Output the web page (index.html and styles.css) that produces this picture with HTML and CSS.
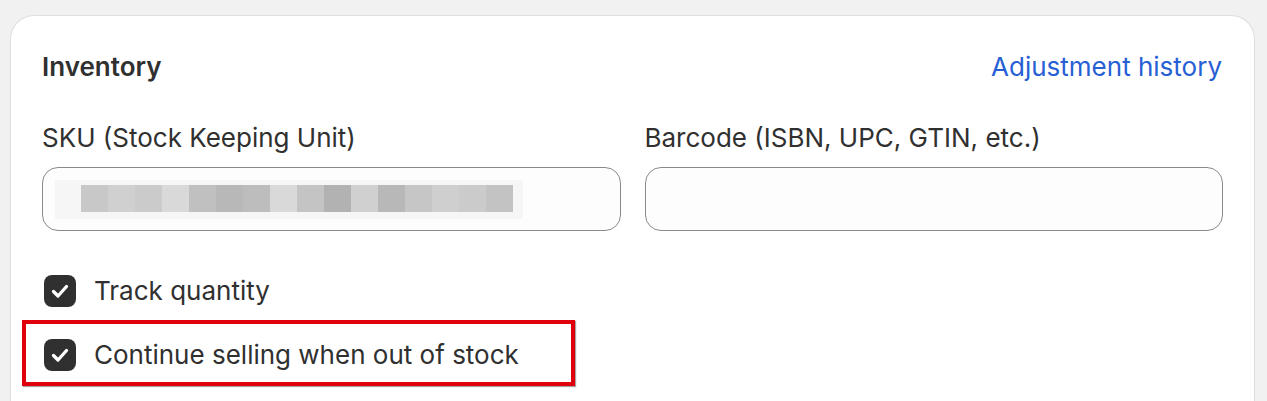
FILE: index.html
```html
<!DOCTYPE html>
<html lang="en">
<head>
<meta charset="utf-8">
<title>Inventory</title>
<link rel="stylesheet" href="styles.css">
</head>
<body>
<div class="page">
  <section class="card">
    <header class="card-head">
      <h2 class="title">Inventory</h2>
      <a class="link" href="#">Adjustment history</a>
    </header>
    <div class="fields">
      <div class="field">
        <label class="label">SKU (Stock Keeping Unit)</label>
        <div class="input">
          <div class="blur">
            <span></span><span></span><span></span><span></span>
            <span></span><span></span><span></span><span></span>
            <span></span><span></span><span></span><span></span>
            <span></span><span></span><span></span><span></span>
          </div>
        </div>
      </div>
      <div class="field">
        <label class="label">Barcode (ISBN, UPC, GTIN, etc.)</label>
        <div class="input"></div>
      </div>
    </div>
    <div class="checks">
      <div class="check">
        <span class="box"><svg viewBox="0 0 32 32" width="32" height="32"><path d="M9.5 16.5 L14 21 L22.5 11.5" fill="none" stroke="#fff" stroke-width="3.3" stroke-linecap="round" stroke-linejoin="round"/></svg></span>
        <span class="check-label">Track quantity</span>
      </div>
      <div class="check">
        <span class="box"><svg viewBox="0 0 32 32" width="32" height="32"><path d="M9.5 16.5 L14 21 L22.5 11.5" fill="none" stroke="#fff" stroke-width="3.3" stroke-linecap="round" stroke-linejoin="round"/></svg></span>
        <span class="check-label">Continue selling when out of stock</span>
      </div>
    </div>
    <div class="highlight"></div>
  </section>
</div>
</body>
</html>
```
FILE: styles.css
```css
* { box-sizing: border-box; }
html, body { margin: 0; padding: 0; background: #f1f1f1; }
body {
  font-family: Inter, "Noto Sans", "Liberation Sans", sans-serif;
  color: #303030;
  overflow: hidden;
}
.page {
  height: 100vh;
  padding: 15px 12px 0 10px;
  display: flex;
  flex-direction: column;
}
.card {
  position: relative;
  flex: 1;
  background: #fff;
  border: 1px solid #dedede;
  border-bottom: none;
  border-radius: 24px 24px 0 0;
  padding: 31px 31px 0 31px;
}
.card-head {
  display: flex;
  justify-content: space-between;
  align-items: center;
  height: 40px;
}
.title {
  margin: 0;
  font-size: 26px;
  line-height: 40px;
  font-weight: 600;
  color: #303030;
}
.link {
  font-size: 26px;
  line-height: 40px;
  color: #2760d4;
  text-decoration: none;
  margin-right: 1px;
}
.fields {
  display: grid;
  grid-template-columns: 1fr 1fr;
  column-gap: 24px;
  margin-top: 31px;
}
.field { display: flex; flex-direction: column; }
.label {
  font-size: 26px;
  line-height: 40px;
  margin-bottom: 9px;
}
.input {
  height: 64px;
  background: #fdfdfd;
  border: 1px solid #8a8a8a;
  border-radius: 16px;
  padding: 12px 0 0 12px;
}
.blur {
  width: 468px;
  height: 39px;
  background: #f6f6f6;
  display: flex;
  padding: 5px 0 7px 26px;
}
.blur span { width: 27px; height: 27px; background: #c8c8c8; }
.blur span:nth-child(2) { background: #d0d0d0; }
.blur span:nth-child(3) { background: #cbcbcb; }
.blur span:nth-child(4) { background: #d9d9d9; }
.blur span:nth-child(5) { background: #c0c0c0; }
.blur span:nth-child(6) { background: #b8b8b8; }
.blur span:nth-child(7) { background: #bdbdbd; }
.blur span:nth-child(8) { background: #d9d9d9; }
.blur span:nth-child(9) { background: #c4c4c4; }
.blur span:nth-child(10) { background: #b2b2b2; }
.blur span:nth-child(11) { background: #d0d0d0; }
.blur span:nth-child(12) { background: #b8b8b8; }
.blur span:nth-child(13) { background: #c6c6c6; }
.blur span:nth-child(14) { background: #cfcfcf; }
.blur span:nth-child(15) { background: #cbcbcb; }
.blur span:nth-child(16) { background: #c3c3c3; }
.checks {
  display: flex;
  flex-direction: column;
  gap: 24px;
  margin-top: 40px;
}
.check {
  display: flex;
  align-items: center;
  height: 40px;
  padding-left: 2px;
}
.box {
  width: 32px;
  height: 32px;
  border-radius: 8px;
  background: #303030;
  display: flex;
}
.check-label {
  font-size: 26px;
  line-height: 40px;
  margin-left: 18px;
}
.highlight {
  position: absolute;
  left: 11px;
  top: 304px;
  width: 553px;
  height: 66px;
  border: 4px solid #e0000b;
  box-shadow: 1px 1px 1px rgba(0,0,0,0.35);
}
```
